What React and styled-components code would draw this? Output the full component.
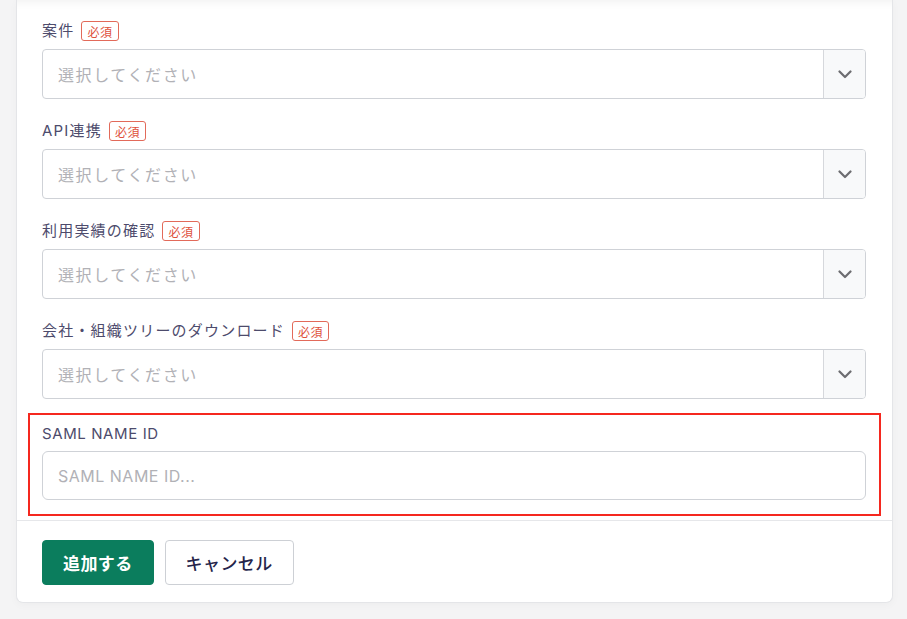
import React from "react";
import styled, { createGlobalStyle } from "styled-components";

const Global = createGlobalStyle`
  html, body { margin: 0; padding: 0; background: #f4f4f5; }
  body { font-family: "Inter", "Noto Sans CJK JP", sans-serif; }
  * { box-sizing: border-box; }
`;

const Page = styled.div`
  padding: 0 14px 16px 16px;
  background: #f4f4f5;
`;

const Card = styled.div`
  background: #ffffff;
  border: 1px solid #e4e5e8;
  border-top: none;
  border-radius: 0 0 7px 7px;
  box-shadow: 0 2px 8px rgba(0, 0, 0, 0.03);
`;

const Body = styled.div`
  display: flex;
  flex-direction: column;
  gap: 22px;
  padding: 21px 26px 4px 25px;
  box-shadow: inset 0 12px 10px -10px rgba(0, 0, 0, 0.06);
`;

const Field = styled.div`
  display: flex;
  flex-direction: column;
  gap: ${(p) => p.$gap || 8}px;
`;

const Highlight = styled.div`
  margin: -8px -15px 0 -14px;
  padding: 9px 13px 14px 12px;
  border: 2px solid #f5281f;
`;

const LabelRow = styled.div`
  display: flex;
  align-items: center;
  gap: 7px;
  height: 20px;
`;

const Label = styled.span`
  font-size: 15px;
  line-height: 20px;
  color: #4d4b6c;
  letter-spacing: ${(p) => (p.$latin ? 0.6 : 1.2)}px;
`;

const Badge = styled.span`
  display: inline-flex;
  align-items: center;
  height: 20px;
  padding: 0 5px;
  border: 1.5px solid #e26a5a;
  border-radius: 3px;
  color: #de4f3b;
  font-size: 12px;
  letter-spacing: 0.6px;
`;

const SelectBox = styled.div`
  display: flex;
  height: 50px;
  border: 1px solid #cfd2d7;
  border-radius: 4px;
  overflow: hidden;
  background: #fff;
`;

const SelectValue = styled.div`
  flex: 1;
  display: flex;
  align-items: center;
  padding-left: 15px;
  font-size: 16px;
  color: #b1b1b6;
  letter-spacing: 1.6px;
`;

const ChevronBox = styled.div`
  width: 42px;
  display: flex;
  align-items: center;
  justify-content: center;
  border-left: 1px solid #d6d8dc;
  background: #f8f9fa;
`;

const TextInput = styled.input`
  height: 49px;
  border: 1px solid #cfd2d7;
  border-radius: 6px;
  padding: 0 15px;
  font-family: "Inter", "Noto Sans CJK JP", sans-serif;
  font-size: 16px;
  color: #333;
  outline: none;
  &::placeholder { color: #b1b1b6; letter-spacing: 0.5px; }
`;

const Footer = styled.div`
  display: flex;
  gap: 11px;
  padding: 19px 25px 17px;
  border-top: 1px solid #e6e7ea;
`;

const Button = styled.button`
  height: 45px;
  padding: 0 20px;
  border-radius: 4px;
  font-family: "Inter", "Noto Sans CJK JP", sans-serif;
  font-size: 17px;
  font-weight: ${(p) => (p.$primary ? 700 : 500)};
  letter-spacing: 0.4px;
  cursor: pointer;
  border: 1px solid ${(p) => (p.$primary ? "#0b7d5d" : "#cdd0d5")};
  background: ${(p) => (p.$primary ? "#0b7d5d" : "#ffffff")};
  color: ${(p) => (p.$primary ? "#ffffff" : "#25244a")};
`;

const Chevron = () => (
  <svg width="14" height="9" viewBox="0 0 14 9" fill="none">
    <path d="M1.5 1.5L7 7L12.5 1.5" stroke="#6c6c70" strokeWidth="2.2" strokeLinecap="round" strokeLinejoin="round" />
  </svg>
);

const selects = ["案件", "API連携", "利用実績の確認", "会社・組織ツリーのダウンロード"];

export default function App() {
  return (
    <>
      <Global />
      <Page>
        <Card>
          <Body>
            {selects.map((l) => (
              <Field key={l}>
                <LabelRow>
                  <Label>{l}</Label>
                  <Badge>必須</Badge>
                </LabelRow>
                <SelectBox>
                  <SelectValue>選択してください</SelectValue>
                  <ChevronBox>
                    <Chevron />
                  </ChevronBox>
                </SelectBox>
              </Field>
            ))}
            <Highlight>
              <Field $gap={7}>
                <LabelRow>
                  <Label $latin>SAML NAME ID</Label>
                </LabelRow>
                <TextInput placeholder="SAML NAME ID..." />
              </Field>
            </Highlight>
          </Body>
          <Footer>
            <Button $primary>追加する</Button>
            <Button>キャンセル</Button>
          </Footer>
        </Card>
      </Page>
    </>
  );
}
